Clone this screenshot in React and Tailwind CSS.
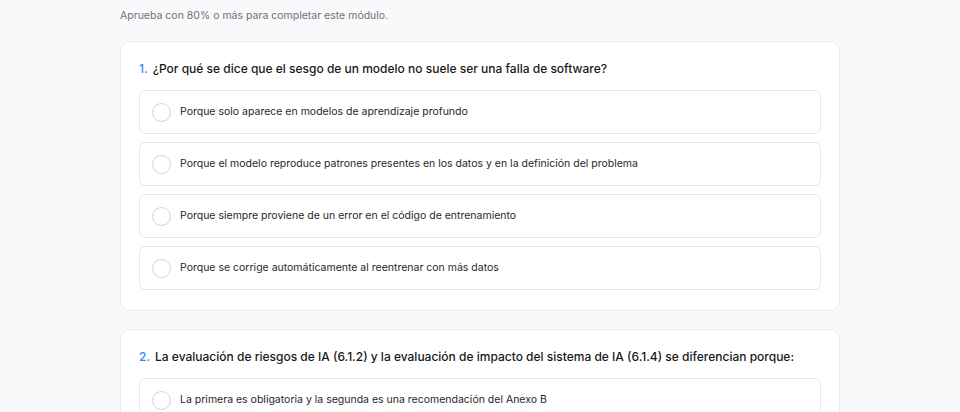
const questions = [
  {
    n: 1,
    title: "¿Por qué se dice que el sesgo de un modelo no suele ser una falla de software?",
    options: [
      "Porque solo aparece en modelos de aprendizaje profundo",
      "Porque el modelo reproduce patrones presentes en los datos y en la definición del problema",
      "Porque siempre proviene de un error en el código de entrenamiento",
      "Porque se corrige automáticamente al reentrenar con más datos",
    ],
  },
  {
    n: 2,
    title:
      "La evaluación de riesgos de IA (6.1.2) y la evaluación de impacto del sistema de IA (6.1.4) se diferencian porque:",
    options: [
      "La primera es obligatoria y la segunda es una recomendación del Anexo B",
      "La primera se centra en la organización y la segunda en las personas afectadas",
      "Ambas son idénticas pero con distinto nombre",
      "La segunda solo aplica a sistemas de alto riesgo",
    ],
  },
];

function Option({ text }) {
  return (
    <label className="flex h-[44px] items-center gap-[9px] rounded-[6px] border border-[#e5e7eb] bg-white px-[12px] cursor-pointer">
      <span className="h-[19px] w-[19px] shrink-0 rounded-full border-[1.5px] border-[#d4d4d8] bg-white" />
      <span className="text-[10.5px] text-[#27272a]">{text}</span>
    </label>
  );
}

export default function App() {
  return (
    <div
      className="min-h-screen bg-[#f8f9fb] pt-[8px] pb-10"
      style={{ fontFamily: "Inter, 'Noto Sans', sans-serif" }}
    >
      <div className="mx-auto w-[720px]">
        <p className="text-[10.5px] leading-[16px] text-[#71717a]">
          Aprueba con 80% o más para completar este módulo.
        </p>
        <div className="mt-[17px] flex flex-col gap-[18px]">
          {questions.map((q) => (
            <div
              key={q.n}
              className="rounded-[10px] border border-[#ececef] bg-white px-[18px] pt-[17px] pb-[20px]"
            >
              <h3 className="flex gap-[5px] text-[12px] leading-[20px] font-medium text-[#18181b]">
                <span className="text-[#3b82f6]">{q.n}.</span>
                <span>{q.title}</span>
              </h3>
              <div className="mt-[11px] flex flex-col gap-[8px]">
                {q.options.map((o) => (
                  <Option key={o} text={o} />
                ))}
              </div>
            </div>
          ))}
        </div>
      </div>
    </div>
  );
}
